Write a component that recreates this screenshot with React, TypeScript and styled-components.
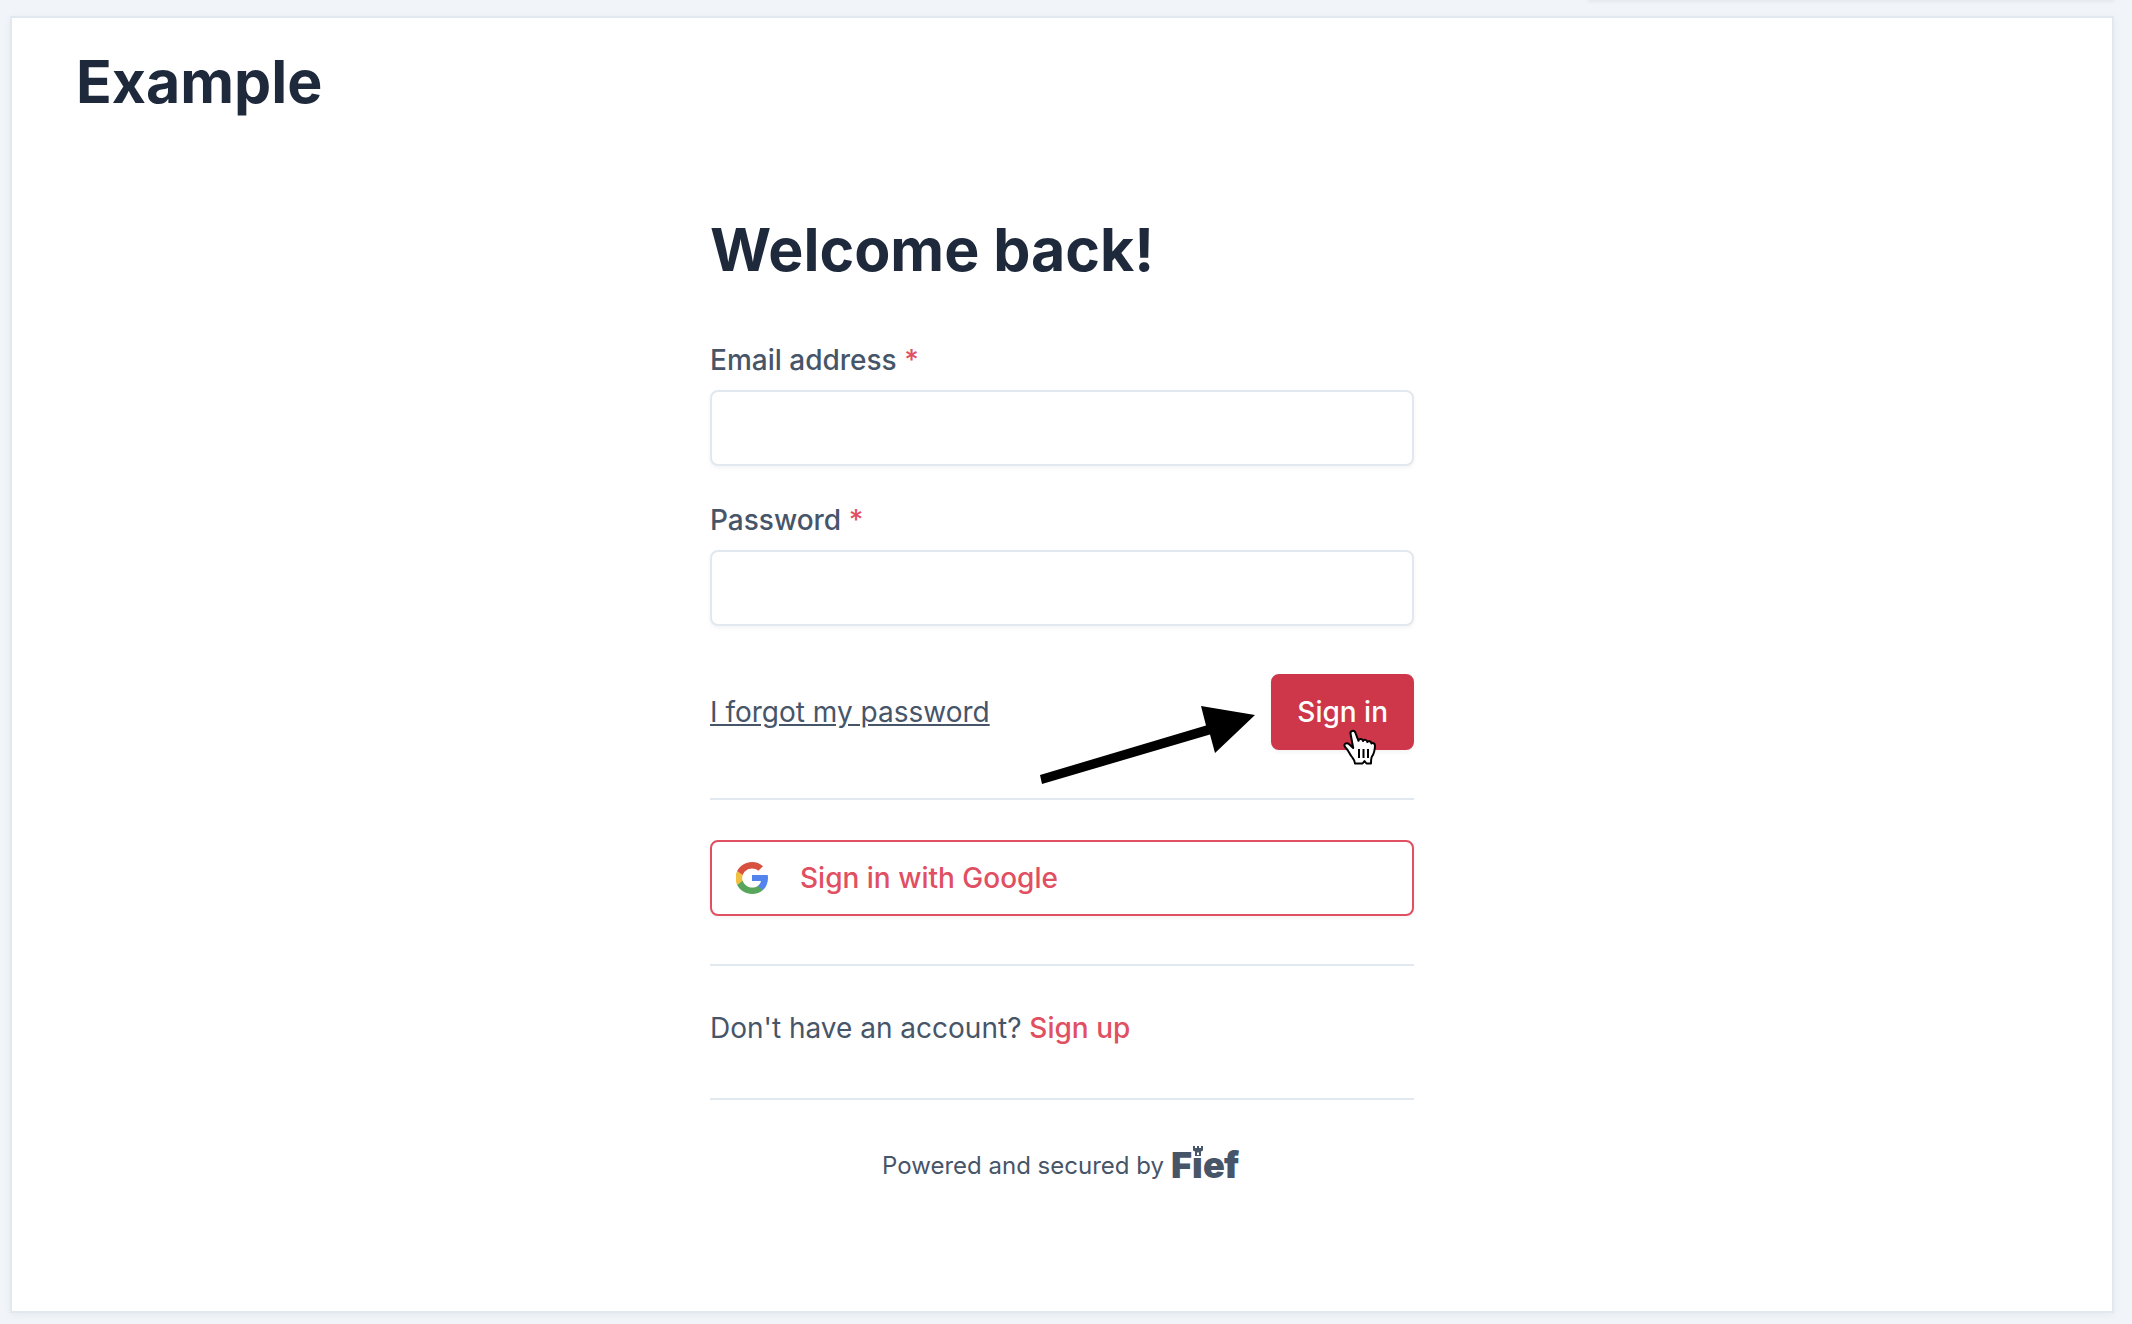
import React from 'react';
import styled, { createGlobalStyle } from 'styled-components';

const color = {
  page: '#f1f5f9',
  line: '#e2e8f0',
  heading: '#1e293b',
  text: '#475569',
  accent: '#e04f62',
  accentDark: '#ce364a',
};

const GlobalStyle = createGlobalStyle`
  *, *::before, *::after { box-sizing: border-box; }
  body {
    margin: 0;
    background: ${color.page};
    color: ${color.text};
    font-family: Inter, "Liberation Sans", sans-serif;
    font-size: 28px;
    line-height: 44px;
    -webkit-font-smoothing: antialiased;
  }
  button, input { font: inherit; }
`;

const Page = styled.div`
  display: flex;
  flex-direction: column;
  min-height: 100vh;
  padding: 0 18px 11px 10px;
  overflow: hidden;
`;

const PreviousPanel = styled.div`
  align-self: flex-end;
  width: 25%;
  height: 40px;
  margin-top: -40px;
  background: #fff;
  box-shadow: 0 2px 4px rgba(15, 23, 42, 0.06);
`;

const Panel = styled.div`
  display: flex;
  flex: 1;
  flex-direction: column;
  margin-top: 16px;
  border: 2px solid ${color.line};
  background: #fff;
  box-shadow: 0 2px 8px rgba(15, 23, 42, 0.05);
`;

const Header = styled.header`
  display: flex;
  align-items: center;
  height: 128px;
  padding: 0 64px;
`;

const Title = styled.div`
  color: ${color.heading};
  font-size: 59px;
  font-weight: 700;
  line-height: 80px;
`;

const Heading = styled.h1`
  margin: 0 0 48px;
  color: ${color.heading};
  font-size: 59px;
  font-weight: 700;
  line-height: 80px;
`;

const Main = styled.main`
  width: 100%;
  max-width: 768px;
  margin: 0 auto;
  padding: 64px 32px;
`;

const Fields = styled.div`
  display: flex;
  flex-direction: column;
  gap: 32px;
`;

const Field = styled.div`
  display: flex;
  flex-direction: column;
  gap: 8px;
`;

const Label = styled.label`
  font-weight: 500;
`;

const Required = styled.span`
  color: ${color.accent};
`;

const Input = styled.input`
  width: 100%;
  height: 76px;
  padding: 0 24px;
  border: 2px solid ${color.line};
  border-radius: 8px;
  outline: none;
  background: #fff;
  color: ${color.heading};
  box-shadow: 0 2px 4px rgba(15, 23, 42, 0.05);
`;

const Actions = styled.div`
  position: relative;
  display: flex;
  align-items: center;
  justify-content: space-between;
  margin: 48px 0;
`;

const ForgotLink = styled.a`
  color: inherit;
  text-decoration: underline;
`;

const Button = styled.button<{ $outline?: boolean }>`
  display: flex;
  align-items: center;
  gap: 32px;
  width: ${(p) => (p.$outline ? '100%' : 'auto')};
  height: 76px;
  padding: 0 24px;
  border: 2px solid ${(p) => (p.$outline ? color.accent : color.accentDark)};
  border-radius: 8px;
  background: ${(p) => (p.$outline ? '#fff' : color.accentDark)};
  color: ${(p) => (p.$outline ? color.accent : '#fff')};
  font-weight: 500;
  box-shadow: 0 2px 4px rgba(15, 23, 42, 0.05);
  cursor: pointer;
`;

const Arrow = styled.svg`
  position: absolute;
  top: 31px;
  right: 158px;
  width: 216px;
  height: 80px;
`;

const Pointer = styled.svg`
  position: absolute;
  top: 55px;
  right: 36px;
  width: 36px;
  height: 38px;
`;

const Section = styled.section`
  padding: 40px 0 48px;
  border-top: 2px solid ${color.line};
`;

const SignUpLink = styled.a`
  color: ${color.accent};
  font-weight: 500;
  text-decoration: none;
`;

const Footer = styled.footer`
  display: flex;
  align-items: center;
  justify-content: center;
  gap: 6px;
  padding-top: 42px;
  border-top: 2px solid ${color.line};
  font-size: 24px;
  line-height: 36px;
`;

const Brand = styled.a`
  display: flex;
  color: inherit;
`;

const GoogleIcon = () => (
  <svg width="32" height="32" viewBox="0 0 32 32" aria-hidden="true">
    <path fill="#5383ec" d="M31.7 13.1H16v6h9c-.4 2-1.6 3.800-3.300 5v4h5.300c3.200-2.900 5-7.200 5-12.100 0-1-.1-2-.3-2.900z" />
    <path fill="#58a55c" d="M16 32c4.400 0 8.200-1.400 11-3.900l-5.300-4.100c-1.500 1-3.400 1.600-5.700 1.600-4.300 0-8-2.900-9.300-6.800H1.200V23C4 28.300 9.600 32 16 32z" />
    <path fill="#f1bf42" d="M6.700 18.800c-.7-1.900-.7-3.900 0-5.700V8.900H1.200c-2.400 4.500-2.400 9.600 0 14.100z" />
    <path fill="#d85140" d="M16 6.400c2.400 0 4.600.8 6.300 2.400L27 4.200C24.100 1.500 20.300 0 16 0 9.600 0 4 3.600 1.200 8.900l5.500 4.200c1.300-3.900 5-6.700 9.300-6.700z" />
  </svg>
);

const FiefLogo = () => (
  <svg
    width="72"
    height="48"
    viewBox="-2 0 72 48"
    role="img"
    aria-label="Fief"
    fill="currentColor"
    fontFamily="Inter, sans-serif"
    fontSize="36"
    fontWeight="900"
  >
    <text x="-1" y="36">F</text>
    <text x="20" y="36">ı</text>
    <text x="31" y="36">e</text>
    <text x="52" y="36">f</text>
    <path fillRule="evenodd" d="M21 4h2v2h2V4h2v2h2V4h2v4.500l-2 1V14h-6V9.500l-2-1zM25 10.500h2V13h-2z" />
  </svg>
);

export default function App() {
  return (
    <>
      <GlobalStyle />
      <Page>
        <PreviousPanel />
        <Panel>
          <Header>
            <Title>Example</Title>
          </Header>
          <Main>
            <Heading>Welcome back!</Heading>
            <form onSubmit={(e) => e.preventDefault()}>
              <Fields>
                <Field>
                  <Label htmlFor="email">
                    Email address <Required>*</Required>
                  </Label>
                  <Input id="email" type="email" />
                </Field>
                <Field>
                  <Label htmlFor="password">
                    Password <Required>*</Required>
                  </Label>
                  <Input id="password" type="password" />
                </Field>
              </Fields>
              <Actions>
                <ForgotLink href="#forgot">I forgot my password</ForgotLink>
                <Button type="submit">Sign in</Button>
                <Arrow viewBox="0 0 216 80" aria-hidden="true">
                  <path d="M0 70 166 20.500 161 1l54 9-40 38-5-18.500L2 79z" />
                </Arrow>
                <Pointer viewBox="0 0 36 38" aria-hidden="true">
                  <path
                    d="M8.500 4.500C8 2 12 .5 13.300 3.500l3.200 8.300c.5-2.300 4-2.300 4.500.2.800-1.800 4-1.500 4.400 1 1-1.500 3.800-.8 4 1.500 1-1 3.700-.5 3.600 2.500-.2 4-.5 7-3 10.500-.8 1.200-1 4-1 7H24.500l-2-2.500-2 2.500H13c0-3-1-4-3-6.500-2.500-3-3-6-6.500-9.500-3-3.500 1-5.500 4-3l3.700 3.500z"
                    fill="#fff"
                    stroke="#000"
                    strokeWidth="2"
                    strokeLinejoin="round"
                  />
                  <path d="M17 20v9M21.500 20v9M26 20v9" stroke="#000" strokeWidth="2" />
                </Pointer>
              </Actions>
            </form>
            <Section>
              <Button type="button" $outline>
                <GoogleIcon />
                Sign in with Google
              </Button>
            </Section>
            <Section>
              Don't have an account? <SignUpLink href="#signup">Sign up</SignUpLink>
            </Section>
            <Footer>
              Powered and secured by
              <Brand href="#fief">
                <FiefLogo />
              </Brand>
            </Footer>
          </Main>
        </Panel>
      </Page>
    </>
  );
}
